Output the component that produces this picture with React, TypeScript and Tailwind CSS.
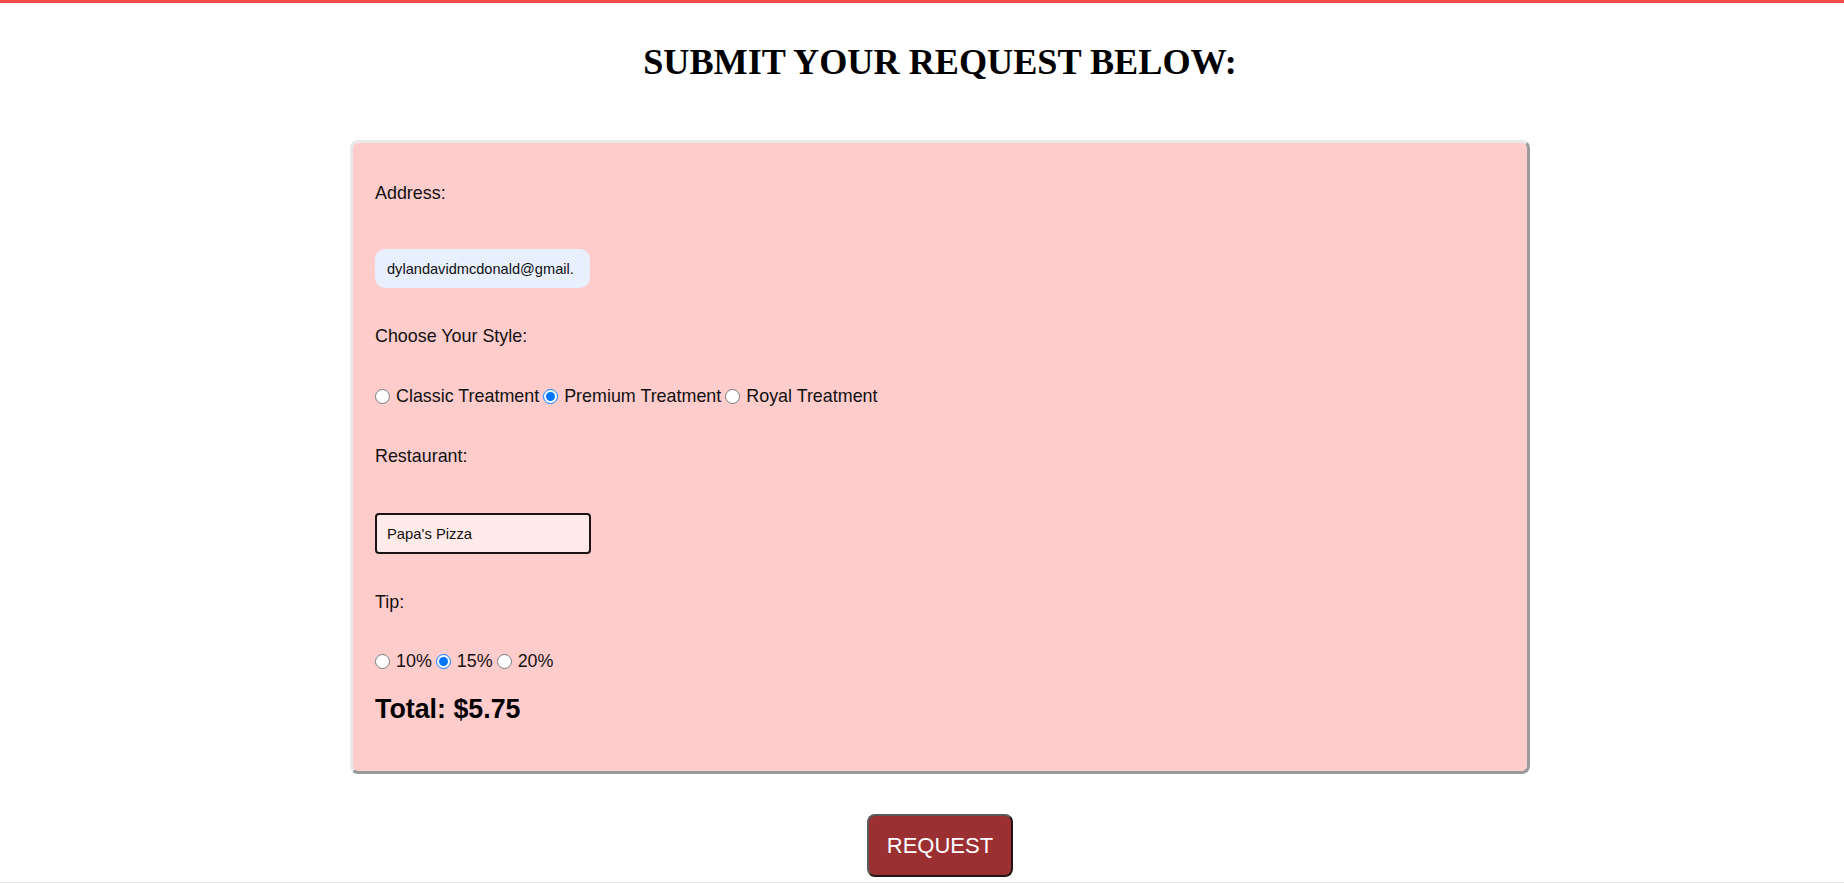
import { useState } from 'react';

const styles = ['Classic Treatment', 'Premium Treatment', 'Royal Treatment'];
const tips = ['10%', '15%', '20%'];

const RadioRow = ({
  name,
  options,
  value,
  onChange,
}: {
  name: string;
  options: string[];
  value: string;
  onChange: (v: string) => void;
}) => (
  <div className="flex items-center h-[20px]">
    {options.map((opt, i) => (
      <label key={opt} className={`flex items-center ${i > 0 ? 'ml-[4px]' : ''}`}>
        <input
          type="radio"
          name={name}
          checked={value === opt}
          onChange={() => onChange(opt)}
          className="m-0 w-[15px] h-[15px] accent-[#0075ff]"
        />
        <span className="ml-[6px]">{opt}</span>
      </label>
    ))}
  </div>
);

export default function App() {
  const [style, setStyle] = useState('Premium Treatment');
  const [tip, setTip] = useState('15%');
  const [restaurant, setRestaurant] = useState("Papa's Pizza");

  return (
    <div className="min-h-[883px] bg-white text-[#111] font-['Liberation_Sans',Arial,sans-serif]">
      {/* top bar */}
      <div className="h-[3px] bg-[#f44a4a]" />

      <div className="flex flex-col items-center pl-[36px]">
        <h1 className="mt-[39px] h-[40px] leading-[40px] text-[36.2px] font-bold text-black font-['Liberation_Serif','Times_New_Roman',serif]">
          SUBMIT YOUR REQUEST BELOW:
        </h1>

        {/* form card */}
        <div className="mt-[58px] w-[1180px] h-[634px] rounded-lg border-[3px] border-t-[#e9e9e9] border-l-[#e9e9e9] border-r-[#9a9a9a] border-b-[#9a9a9a] bg-[#ffcccc] pl-[22px] pt-[40px] text-[17.9px] leading-[20px]">
          <div>Address:</div>
          <input
            type="text"
            defaultValue="dylandavidmcdonald@gmail.com"
            className="mt-[46px] block w-[215px] h-[39px] rounded-[10px] bg-[#e8f0fe] pl-[12px] pr-[16px] text-[14.6px] text-[#111] outline-none"
          />

          <div className="mt-[38px]">Choose Your Style:</div>
          <div className="mt-[40px]">
            <RadioRow name="style" options={styles} value={style} onChange={setStyle} />
          </div>

          <div className="mt-[40px]">Restaurant:</div>
          <input
            type="text"
            value={restaurant}
            onChange={(e) => setRestaurant(e.target.value)}
            className="mt-[47px] block w-[216px] h-[41px] rounded-[4px] border-2 border-[#1c1414] bg-[#ffeaea] px-[10px] text-[14.8px] text-[#111] outline-none"
          />

          <div className="mt-[38px]">Tip:</div>
          <div className="mt-[39px]">
            <RadioRow name="tip" options={tips} value={tip} onChange={setTip} />
          </div>

          <div className="mt-[23px] h-[30px] leading-[30px] text-[26.8px] font-bold text-black">
            Total: $5.75
          </div>
        </div>

        <button className="mt-[40px] w-[146px] h-[63px] rounded-[8px] border-2 border-t-[#5a5a5a] border-l-[#5a5a5a] border-r-[#241414] border-b-[#241414] bg-[#9b3033] text-[22px] text-white">
          REQUEST
        </button>
      </div>

      <div className="mt-[5px] h-px bg-[#e2e2e2]" />
    </div>
  );
}
